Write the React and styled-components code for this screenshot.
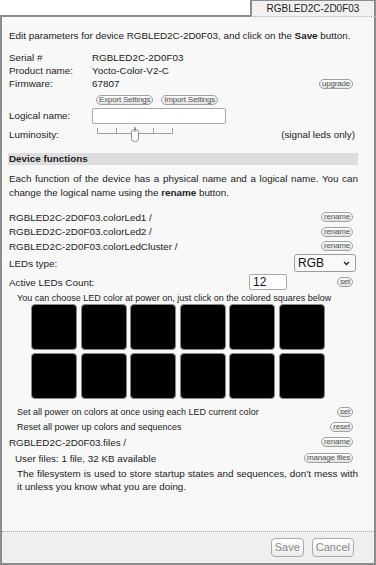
import React from 'react';
import styled, { createGlobalStyle } from 'styled-components';

const Global = createGlobalStyle`
  html, body { margin: 0; padding: 0; background: #ffffff; }
  body { font-family: "Liberation Sans", Arial, sans-serif; font-size: 9.85px; color: #222; }
  #root { width: 376px; height: 565px; }
  * { box-sizing: border-box; }
`;

const Window = styled.div`
  width: 376px;
  height: 565px;
  display: flex;
  flex-direction: column;
`;

const TabStrip = styled.div`
  display: flex;
  height: 17px;
  flex: none;
`;

const TabFiller = styled.div`
  flex: 1;
  border-bottom: 2px solid #8c8c8c;
`;

const Tab = styled.div`
  width: 126px;
  border: 2px solid #8c8c8c;
  border-top-width: 1px;
  border-bottom: 1px dotted #b4b4b4;
  background: #f1f1f1;
  display: flex;
  align-items: center;
  justify-content: center;
  font-size: 10px;
  color: #222;
`;

const Panel = styled.div`
  flex: 1;
  display: flex;
  flex-direction: column;
  border: 2px solid #8c8c8c;
  border-top: none;
  background: #f8f8f8;
  min-height: 0;
`;

const Content = styled.div`
  flex: 1;
  padding: 0 16px 0 7px;
  display: flex;
  flex-direction: column;
`;

const Intro = styled.p`
  margin: 12px 0 0;
  line-height: 14px;
`;

const InfoGrid = styled.div`
  margin-top: 8px;
  display: grid;
  grid-template-columns: 83px 1fr auto;
  grid-auto-rows: 13px;
  align-items: center;
  padding-right: 5px;
`;

const Row = styled.div`
  display: flex;
  align-items: center;
  white-space: nowrap;
  height: ${(p) => p.$h || 14.5}px;
  margin-top: ${(p) => p.$mt || 0}px;
  padding-left: ${(p) => p.$indent || 0}px;
  padding-right: ${(p) => (p.$pr === undefined ? 5 : p.$pr)}px;
  font-size: ${(p) => (p.$small ? '9px' : 'inherit')};
`;

const Label = styled.span`
  width: ${(p) => p.$w || 83}px;
  flex: none;
`;

const Grow = styled.span`
  flex: 1;
`;

const Pill = styled.button`
  font-family: "Liberation Sans", Arial, sans-serif;
  font-size: 8px;
  line-height: 8px;
  height: 10px;
  padding: 0 2px;
  border: 1px solid #a0a0a0;
  border-radius: 5px;
  background: linear-gradient(#ffffff, #e2e2e2);
  color: #555;
  letter-spacing: -0.2px;
  cursor: pointer;
  flex: none;
`;

const SettingsRow = styled.div`
  display: flex;
  align-items: flex-end;
  gap: 8px;
  height: 15px;
  padding-left: 87px;
`;

const TextInput = styled.input`
  width: ${(p) => p.$w}px;
  height: 16px;
  border: 1px solid #a8a8a8;
  border-radius: 2px;
  background: #fff;
  font-family: "Liberation Sans", Arial, sans-serif;
  font-size: 12px;
  padding: 0 3px;
  color: #111;
  flex: none;
`;

const SliderBox = styled.svg`
  margin-left: 4px;
  flex: none;
`;

const SectionBar = styled.div`
  margin-top: 10px;
  height: 12px;
  line-height: 12px;
  background: #dedede;
  font-weight: bold;
  padding-left: 1px;
  margin-left: -1px;
`;

const Para = styled.p`
  margin: ${(p) => p.$mt || 0}px 0 0;
  padding-left: ${(p) => p.$indent || 0}px;
  line-height: ${(p) => p.$lh || 14}px;
  text-align: justify;
`;

const SelectWrap = styled.div`
  position: relative;
  width: 62px;
  height: 18px;
  margin-right: -3px;
  flex: none;
`;

const Select = styled.select`
  appearance: none;
  -webkit-appearance: none;
  width: 100%;
  height: 100%;
  border: 1px solid #9c9c9c;
  border-radius: 3px;
  background: #f9f9f9;
  font-family: "Liberation Sans", Arial, sans-serif;
  font-size: 12px;
  color: #111;
  padding: 0 0 0 3px;
`;

const Chevron = styled.svg`
  position: absolute;
  right: 6px;
  top: 7px;
  pointer-events: none;
`;

const RightCell = styled.div`
  width: 71px;
  padding-right: 5px;
  display: flex;
  justify-content: flex-end;
  flex: none;
`;

const LedGrid = styled.div`
  display: grid;
  grid-template-columns: repeat(6, 46px);
  grid-auto-rows: 46px;
  gap: 3.5px;
  margin-left: 22px;
`;

const Led = styled.div`
  background: ${(p) => p.$color};
  border: 1px solid #8a8a8a;
  border-radius: 4px;
`;

const Footer = styled.div`
  height: 32px;
  flex: none;
  border-top: 1px dotted #a8a8a8;
  background: #efefef;
  display: flex;
  justify-content: flex-end;
  align-items: center;
  gap: 8px;
  padding: 0 20px 1px 0;
`;

const FooterButton = styled.button`
  height: 19px;
  padding: 0 3px;
  border: 1px solid #aaaaaa;
  border-radius: 4px;
  background: linear-gradient(#ffffff, #ececec);
  font-family: "Liberation Sans", Arial, sans-serif;
  font-size: 11px;
  color: #8a8a8a;
`;

const Slider = () => (
  <SliderBox width="80" height="16" viewBox="0 0 80 16">
    <g stroke="#a0a0a0" strokeWidth="1" fill="none">
      <line x1="1" y1="7.5" x2="77" y2="7.5" />
      <line x1="1.5" y1="2" x2="1.5" y2="8" />
      <line x1="20.5" y1="2" x2="20.5" y2="8" />
      <line x1="39.5" y1="2" x2="39.5" y2="8" />
      <line x1="57.5" y1="2" x2="57.5" y2="8" />
      <line x1="76.5" y1="2" x2="76.5" y2="8" />
    </g>
    <rect x="35.5" y="3.5" width="7" height="12" rx="3" fill="#ffffff" stroke="#8a8a8a" />
    <line x1="39" y1="1" x2="39" y2="6" stroke="#777" />
  </SliderBox>
);

const leds = Array.from({ length: 12 }, () => '#000000');

export default function App() {
  return (
    <>
      <Global />
      <Window>
        <TabStrip>
          <TabFiller />
          <Tab>RGBLED2C-2D0F03</Tab>
        </TabStrip>
        <Panel>
          <Content>
            <Intro>
              Edit parameters for device RGBLED2C-2D0F03, and click on the <b>Save</b> button.
            </Intro>
            <InfoGrid>
              <span>Serial #</span>
              <span>RGBLED2C-2D0F03</span>
              <span />
              <span>Product name:</span>
              <span>Yocto-Color-V2-C</span>
              <span />
              <span>Firmware:</span>
              <span>67807</span>
              <Pill>upgrade</Pill>
            </InfoGrid>
            <SettingsRow>
              <Pill>Export Settings</Pill>
              <Pill>Import Settings</Pill>
            </SettingsRow>
            <Row $h={19} $mt={1}>
              <Label>Logical name:</Label>
              <TextInput $w={134} defaultValue="" />
            </Row>
            <Row $h={18} $pr={3}>
              <Label>Luminosity:</Label>
              <Slider />
              <Grow />
              <span>(signal leds only)</span>
            </Row>
            <SectionBar>Device functions</SectionBar>
            <Para $mt={7}>
              Each function of the device has a physical name and a logical name. You can change the logical name using
              the <b>rename</b> button.
            </Para>
            <Row $mt={10}>
              <Grow>RGBLED2C-2D0F03.colorLed1 /</Grow>
              <Pill>rename</Pill>
            </Row>
            <Row>
              <Grow>RGBLED2C-2D0F03.colorLed2 /</Grow>
              <Pill>rename</Pill>
            </Row>
            <Row>
              <Grow>RGBLED2C-2D0F03.colorLedCluster /</Grow>
              <Pill>rename</Pill>
            </Row>
            <Row $h={19}>
              <Grow>LEDs type:</Grow>
              <SelectWrap>
                <Select defaultValue="RGB">
                  <option>RGB</option>
                  <option>RGBW</option>
                  <option>WS2812B</option>
                </Select>
                <Chevron width="7" height="5" viewBox="0 0 7 5">
                  <path d="M1 1 L3.5 3.5 L6 1" stroke="#222" strokeWidth="1.3" fill="none" />
                </Chevron>
              </SelectWrap>
            </Row>
            <Row $h={19} $pr={0}>
              <Grow>Active LEDs Count:</Grow>
              <TextInput $w={38} defaultValue="12" />
              <RightCell>
                <Pill>set</Pill>
              </RightCell>
            </Row>
            <Row $h={12} $indent={8} $small>
              <span>You can choose LED color at power on, just click on the colored squares below</span>
            </Row>
            <LedGrid>
              {leds.map((c, i) => (
                <Led key={i} $color={c} />
              ))}
            </LedGrid>
            <Row $h={15} $mt={5} $indent={8} $small>
              <Grow>Set all power on colors at once using each LED current color</Grow>
              <Pill>set</Pill>
            </Row>
            <Row $h={15} $indent={8} $small>
              <Grow>Reset all power up colors and sequences</Grow>
              <Pill>reset</Pill>
            </Row>
            <Row $h={16}>
              <Grow>RGBLED2C-2D0F03.files /</Grow>
              <Pill>rename</Pill>
            </Row>
            <Row $h={16} $indent={6}>
              <Grow>User files: 1 file, 32 KB available</Grow>
              <Pill>manage files</Pill>
            </Row>
            <Para $mt={1} $indent={8} $lh={13}>
              The filesystem is used to store startup states and sequences, don't mess with it unless you know what you
              are doing.
            </Para>
          </Content>
          <Footer>
            <FooterButton>Save</FooterButton>
            <FooterButton>Cancel</FooterButton>
          </Footer>
        </Panel>
      </Window>
    </>
  );
}
